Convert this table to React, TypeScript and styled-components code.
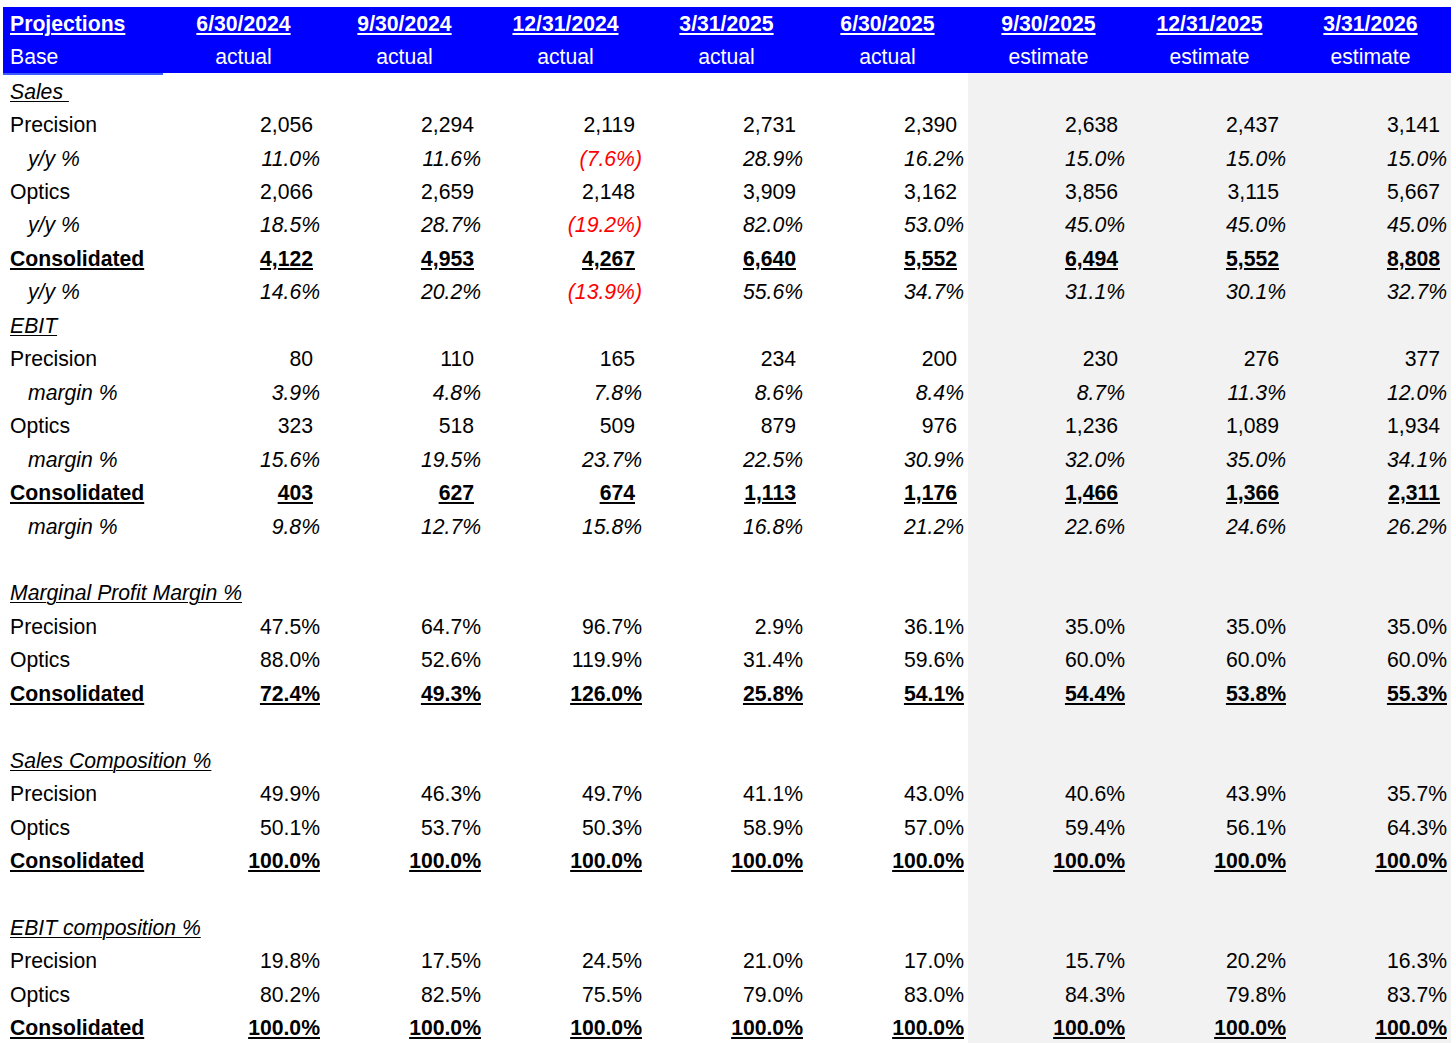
import { FC } from 'react';
import styled, { createGlobalStyle } from 'styled-components';

const GlobalStyle = createGlobalStyle`
  html, body {
    margin: 0;
    padding: 0;
    background: #fff;
    overflow: hidden;
  }
  body {
    font-family: "Liberation Sans", Arial, sans-serif;
  }
`;

const Sheet = styled.div`
  display: grid;
  grid-template-columns: 160px repeat(8, 161px);
  padding: 7.3px 0 0 3px;
  font-size: 21.2px;
  line-height: 24px;
  color: #000;
`;

const HeadCell = styled.div<{ $first?: boolean; $top?: boolean; $mark?: boolean }>`
  box-sizing: border-box;
  height: 32.7px;
  display: flex;
  align-items: flex-end;
  justify-content: ${(p) => (p.$first ? 'flex-start' : 'center')};
  padding: 0 0 3.5px ${(p) => (p.$first ? '7px' : '0')};
  background: #0000ff;
  color: #fff;
  font-weight: ${(p) => (p.$top ? 700 : 400)};
  text-decoration: ${(p) => (p.$top ? 'underline' : 'none')};
  text-decoration-thickness: 2px;
  text-underline-offset: 2px;
  white-space: nowrap;
  box-shadow: ${(p) => (p.$mark ? '0 2px 0 #3d5cff' : 'none')};
`;

type Kind = 'section' | 'item' | 'sub' | 'total' | 'blank';

const LabelCell = styled.div<{ $kind: Kind }>`
  box-sizing: border-box;
  height: 33.46px;
  display: flex;
  align-items: flex-end;
  padding: 0 0 2.5px ${(p) => (p.$kind === 'sub' ? '25px' : '7px')};
  white-space: pre;
  font-style: ${(p) => (p.$kind === 'section' || p.$kind === 'sub' ? 'italic' : 'normal')};
  font-weight: ${(p) => (p.$kind === 'total' ? 700 : 400)};
  text-decoration: ${(p) => (p.$kind === 'section' || p.$kind === 'total' ? 'underline' : 'none')};
  text-decoration-thickness: ${(p) => (p.$kind === 'total' ? '2px' : '1px')};
  text-underline-offset: 2px;
`;

const ValueCell = styled.div<{ $shade: boolean; $kind: Kind; $pct: boolean; $neg: boolean }>`
  box-sizing: border-box;
  height: 33.46px;
  display: flex;
  align-items: flex-end;
  justify-content: flex-end;
  padding: 0 ${(p) => (p.$pct ? '4px' : '11px')} 2.5px 0;
  background: ${(p) => (p.$shade ? '#f2f2f2' : 'transparent')};
  color: ${(p) => (p.$neg ? '#ff0000' : '#000')};
  font-style: ${(p) => (p.$kind === 'sub' ? 'italic' : 'normal')};
  font-weight: ${(p) => (p.$kind === 'total' ? 700 : 400)};
  text-decoration: ${(p) => (p.$kind === 'total' ? 'underline' : 'none')};
  text-decoration-thickness: 2px;
  text-underline-offset: 2px;
  white-space: nowrap;
`;

interface IRow {
  label: string;
  kind: Kind;
  values?: string[];
  pct?: boolean;
}

const dates = [
  '6/30/2024',
  '9/30/2024',
  '12/31/2024',
  '3/31/2025',
  '6/30/2025',
  '9/30/2025',
  '12/31/2025',
  '3/31/2026',
];

const status = ['actual', 'actual', 'actual', 'actual', 'actual', 'estimate', 'estimate', 'estimate'];

const hundred = Array(8).fill('100.0%');

const rows: IRow[] = [
  { label: 'Sales ', kind: 'section' },
  { label: 'Precision', kind: 'item', values: ['2,056', '2,294', '2,119', '2,731', '2,390', '2,638', '2,437', '3,141'] },
  { label: 'y/y %', kind: 'sub', pct: true, values: ['11.0%', '11.6%', '(7.6%)', '28.9%', '16.2%', '15.0%', '15.0%', '15.0%'] },
  { label: 'Optics', kind: 'item', values: ['2,066', '2,659', '2,148', '3,909', '3,162', '3,856', '3,115', '5,667'] },
  { label: 'y/y %', kind: 'sub', pct: true, values: ['18.5%', '28.7%', '(19.2%)', '82.0%', '53.0%', '45.0%', '45.0%', '45.0%'] },
  { label: 'Consolidated', kind: 'total', values: ['4,122', '4,953', '4,267', '6,640', '5,552', '6,494', '5,552', '8,808'] },
  { label: 'y/y %', kind: 'sub', pct: true, values: ['14.6%', '20.2%', '(13.9%)', '55.6%', '34.7%', '31.1%', '30.1%', '32.7%'] },
  { label: 'EBIT', kind: 'section' },
  { label: 'Precision', kind: 'item', values: ['80', '110', '165', '234', '200', '230', '276', '377'] },
  { label: 'margin %', kind: 'sub', pct: true, values: ['3.9%', '4.8%', '7.8%', '8.6%', '8.4%', '8.7%', '11.3%', '12.0%'] },
  { label: 'Optics', kind: 'item', values: ['323', '518', '509', '879', '976', '1,236', '1,089', '1,934'] },
  { label: 'margin %', kind: 'sub', pct: true, values: ['15.6%', '19.5%', '23.7%', '22.5%', '30.9%', '32.0%', '35.0%', '34.1%'] },
  { label: 'Consolidated', kind: 'total', values: ['403', '627', '674', '1,113', '1,176', '1,466', '1,366', '2,311'] },
  { label: 'margin %', kind: 'sub', pct: true, values: ['9.8%', '12.7%', '15.8%', '16.8%', '21.2%', '22.6%', '24.6%', '26.2%'] },
  { label: '', kind: 'blank' },
  { label: 'Marginal Profit Margin %', kind: 'section' },
  { label: 'Precision', kind: 'item', pct: true, values: ['47.5%', '64.7%', '96.7%', '2.9%', '36.1%', '35.0%', '35.0%', '35.0%'] },
  { label: 'Optics', kind: 'item', pct: true, values: ['88.0%', '52.6%', '119.9%', '31.4%', '59.6%', '60.0%', '60.0%', '60.0%'] },
  { label: 'Consolidated', kind: 'total', pct: true, values: ['72.4%', '49.3%', '126.0%', '25.8%', '54.1%', '54.4%', '53.8%', '55.3%'] },
  { label: '', kind: 'blank' },
  { label: 'Sales Composition %', kind: 'section' },
  { label: 'Precision', kind: 'item', pct: true, values: ['49.9%', '46.3%', '49.7%', '41.1%', '43.0%', '40.6%', '43.9%', '35.7%'] },
  { label: 'Optics', kind: 'item', pct: true, values: ['50.1%', '53.7%', '50.3%', '58.9%', '57.0%', '59.4%', '56.1%', '64.3%'] },
  { label: 'Consolidated', kind: 'total', pct: true, values: hundred },
  { label: '', kind: 'blank' },
  { label: 'EBIT composition %', kind: 'section' },
  { label: 'Precision', kind: 'item', pct: true, values: ['19.8%', '17.5%', '24.5%', '21.0%', '17.0%', '15.7%', '20.2%', '16.3%'] },
  { label: 'Optics', kind: 'item', pct: true, values: ['80.2%', '82.5%', '75.5%', '79.0%', '83.0%', '84.3%', '79.8%', '83.7%'] },
  { label: 'Consolidated', kind: 'total', pct: true, values: hundred },
];

const App: FC = () => {
  return (
    <>
      <GlobalStyle />
      <Sheet>
        <HeadCell $first $top>
          Projections
        </HeadCell>
        {dates.map((d) => (
          <HeadCell key={d} $top>
            {d}
          </HeadCell>
        ))}
        <HeadCell $first $mark>
          Base
        </HeadCell>
        {status.map((s, i) => (
          <HeadCell key={i}>{s}</HeadCell>
        ))}
        {rows.map((row, r) => [
          <LabelCell key={`l${r}`} $kind={row.kind}>
            {row.label}
          </LabelCell>,
          ...Array.from({ length: 8 }, (_, c) => {
            const v = row.values ? row.values[c] : '';
            return (
              <ValueCell
                key={`v${r}-${c}`}
                $shade={c >= 5}
                $kind={row.kind}
                $pct={!!row.pct}
                $neg={v.startsWith('(')}
              >
                {v}
              </ValueCell>
            );
          }),
        ])}
      </Sheet>
    </>
  );
};

export default App;
